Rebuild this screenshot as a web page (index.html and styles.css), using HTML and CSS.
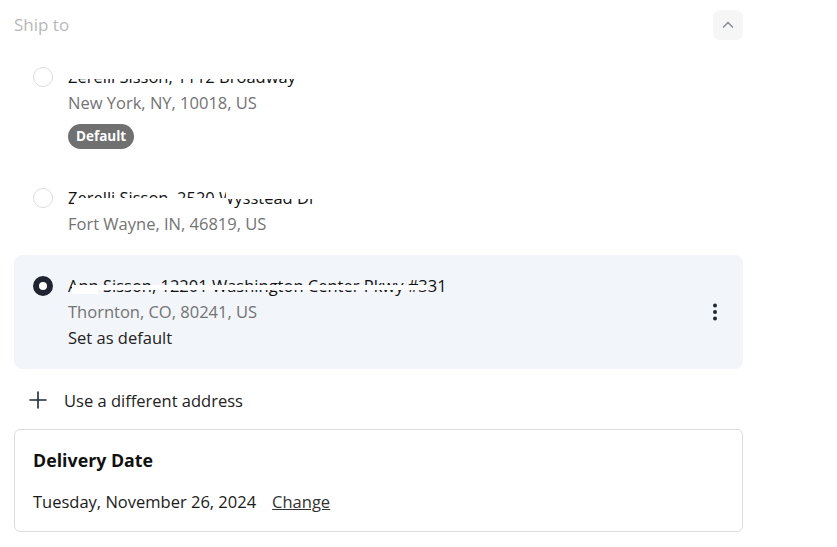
FILE: index.html
```html
<!DOCTYPE html>
<html>
<head>
<meta charset="utf-8">
<link rel="stylesheet" href="styles.css">
</head>
<body>
<div class="panel">
  <div class="header">
    <span class="title">Ship to</span>
    <button class="collapse" aria-label="Collapse">
      <svg width="14" height="14" viewBox="0 0 14 14"><path d="M2.5 9 L7 4.5 L11.5 9" fill="none" stroke="#8a8f98" stroke-width="1.6" stroke-linecap="round" stroke-linejoin="round"/></svg>
    </button>
  </div>

  <div class="address">
    <span class="radio"></span>
    <div class="lines">
      <div class="line1 redact-a">Zerelli Sisson, 1112 Broadway<span class="mask m1"></span></div>
      <div class="line2">New York, NY, 10018, US</div>
      <span class="badge">Default</span>
    </div>
  </div>

  <div class="address">
    <span class="radio"></span>
    <div class="lines">
      <div class="line1">Zerelli Sisson, 2520 Wysstead Dr<span class="mask m2a"></span><span class="mask m2b"></span></div>
      <div class="line2">Fort Wayne, IN, 46819, US</div>
    </div>
  </div>

  <div class="address selected">
    <span class="radio checked"></span>
    <div class="lines">
      <div class="line1">Ann Sisson, 12201 Washington Center Pkwy #331<span class="mask m3a"></span><span class="mask m3b"></span></div>
      <div class="line2">Thornton, CO, 80241, US</div>
      <div class="line3">Set as default</div>
    </div>
    <button class="kebab" aria-label="More">
      <svg width="6" height="20" viewBox="0 0 6 20"><circle cx="3" cy="3.5" r="2" fill="#1f2937"/><circle cx="3" cy="10" r="2" fill="#1f2937"/><circle cx="3" cy="16.5" r="2" fill="#1f2937"/></svg>
    </button>
  </div>

  <div class="add">
    <svg width="20" height="20" viewBox="0 0 20 20"><path d="M10 2 V18 M2 10 H18" stroke="#1f2937" stroke-width="1.6" stroke-linecap="round"/></svg>
    <span>Use a different address</span>
  </div>

  <div class="delivery">
    <div class="dtitle">Delivery Date</div>
    <div class="drow">
      <span>Tuesday, November 26, 2024</span>
      <a class="change" href="#">Change</a>
    </div>
  </div>
</div>
</body>
</html>
```

FILE: styles.css
```css
* { box-sizing: border-box; }
body {
  margin: 0;
  background: #fff;
  font-family: "Open Sans", "Noto Sans", "Liberation Sans", sans-serif;
  font-size: 16.5px;
  color: #1a1a1a;
}
.panel {
  width: 729px;
  margin-left: 14px;
}
.header {
  height: 46px;
  padding-top: 10px;
  display: flex;
  justify-content: space-between;
  align-items: flex-start;
}
.title {
  line-height: 30px;
  font-size: 17px;
  color: #b8b8b8;
}
.collapse {
  width: 30px;
  height: 30px;
  border: none;
  border-radius: 7px;
  background: #f6f6f6;
  display: flex;
  align-items: center;
  justify-content: center;
  padding: 0;
}
.address {
  display: flex;
  align-items: flex-start;
  padding: 18px 0 18px 19px;
  position: relative;
}
.address.selected {
  background: #f2f5f9;
  border-radius: 8px;
  align-items: center;
  padding-right: 22px;
}
.radio {
  width: 20px;
  height: 20px;
  border-radius: 50%;
  border: 1px solid #dcdcdc;
  background: #fff;
  flex: none;
  margin-top: 3px;
  margin-right: 15px;
}
.selected .radio { align-self: flex-start; }
.radio.checked {
  border: 6px solid #1f2430;
  background: #fff;
}
.lines {
  flex: 1;
  line-height: 26px;
}
.line1 {
  position: relative;
  display: inline-block;
  color: #111;
}
.line2 { color: #737373; }
.line3 { color: #222; }
.mask {
  position: absolute;
  background: #fff;
}
.m1 { left: -2px; right: -2px; top: 0; height: 15px; }
.m2a { left: 6px; width: 152px; top: 13px; height: 10px; }
.m2b { left: 158px; width: 100px; top: 0; height: 14px; }
.m3a { left: 4px; width: 355px; top: 12px; height: 5px; }
.m3b { left: 4px; width: 26px; top: 12px; height: 9px; }
.badge {
  display: inline-block;
  margin-top: 8px;
  height: 25px;
  line-height: 25px;
  padding: 0 8px;
  border-radius: 13px;
  background: #707070;
  color: #fff;
  font-weight: 700;
  font-size: 13.5px;
}
.kebab {
  border: none;
  background: none;
  padding: 0;
  width: 12px;
  height: 20px;
  display: flex;
  align-items: center;
  justify-content: center;
  margin-left: 10px;
}
.add {
  display: flex;
  align-items: center;
  height: 26px;
  margin: 18px 0 16px 14px;
  gap: 16px;
  color: #222;
}
.delivery {
  border: 1px solid #dcdcdc;
  border-radius: 6px;
  padding: 18px 18px 16px;
}
.dtitle {
  font-weight: 700;
  font-size: 17.8px;
  line-height: 24px;
  color: #111;
}
.drow {
  margin-top: 17px;
  line-height: 26px;
  display: flex;
  gap: 16px;
  color: #1a1a1a;
}
.change {
  color: #333;
  text-decoration: underline;
}
```
